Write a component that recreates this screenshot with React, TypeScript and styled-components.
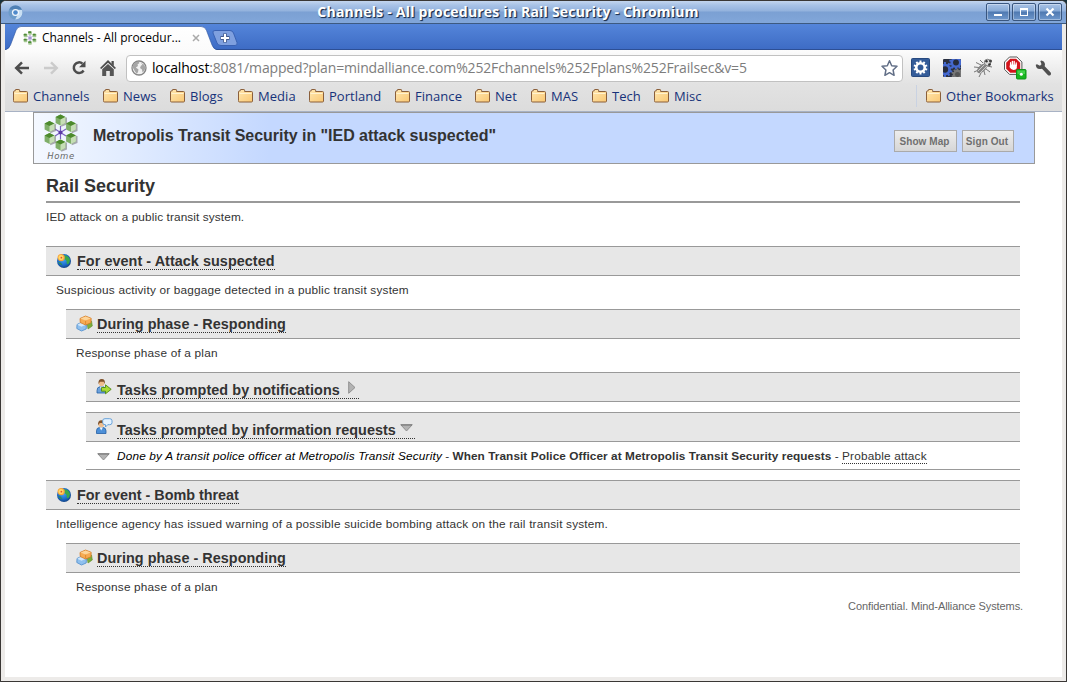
import React from "react";
import styled, { createGlobalStyle } from "styled-components";

const Global = createGlobalStyle`
  *, *::before, *::after { box-sizing: border-box; }
  html, body { margin: 0; padding: 0; background: #17303b; }
  body { width: 1067px; height: 682px; overflow: hidden; }
  svg { display: block; flex: none; }
`;

const uiFont = `"Open Sans", "Noto Sans", sans-serif`;
const pageFont = `"Liberation Sans", Arial, sans-serif`;

/* ---------- window frame ---------- */

const Window = styled.div`
  width: 1067px;
  height: 682px;
  display: flex;
  flex-direction: column;
  background: #edebe9;
  border: 1px solid #3a3735;
  border-radius: 6px 6px 0 0;
  overflow: hidden;
  font-family: ${uiFont};
`;

const TitleBar = styled.header`
  flex: none;
  height: 23px;
  display: flex;
  align-items: center;
  padding: 0 4px 0 7px;
  background: linear-gradient(#c3d5ee 0, #a9c3e7 4px, #93b2dd 10px, #7ba0d3 11px, #81a6d9 21px);
  border-bottom: 1px solid #3d5a80;
`;

const WindowTitle = styled.h1`
  flex: 1;
  margin: 0;
  padding-left: 7px;
  text-align: center;
  font-size: 14px;
  line-height: 20px;
  font-weight: 700;
  letter-spacing: 0.2px;
  color: #fff;
  text-shadow: 1px 1px 1px #1d3050, 1px 1px 0 #3b5379;
  white-space: nowrap;
`;

const WindowButtons = styled.div`
  display: flex;
  gap: 2px;
`;

const WindowButton = styled.button`
  width: 24px;
  height: 18px;
  padding: 0;
  display: grid;
  place-items: center;
  border: 1px solid #39567f;
  border-radius: 2px;
  background: linear-gradient(#a9c3e6 0, #86a9d6 7px, #4f79b1 8px, #6f98cd 100%);
  box-shadow: inset 0 0 0 1px rgba(255, 255, 255, 0.35);
`;

const Client = styled.div`
  flex: 1;
  min-height: 0;
  margin: 0 4px 4px;
  display: flex;
  flex-direction: column;
`;

/* ---------- tabs ---------- */

const TabStrip = styled.div`
  flex: none;
  height: 26px;
  display: flex;
  align-items: flex-end;
  background: linear-gradient(#5485da, #3d6bc4);
  box-shadow: inset 0 -1px 0 #2d4f95;
`;

const Tab = styled.div`
  position: relative;
  width: 210px;
  height: 24px;
  display: flex;
  align-items: center;
  padding-left: 18px;
`;

const TabShape = styled.svg`
  position: absolute;
  left: 0;
  top: 0;
`;

const TabTitle = styled.span`
  position: relative;
  width: 150px;
  margin-left: 5px;
  font-size: 12px;
  line-height: 24px;
  letter-spacing: -0.03px;
  color: #000;
  white-space: nowrap;
`;

const TabIcon = styled.span`
  position: relative;
`;

const NewTab = styled.span`
  margin: 0 0 4px -3px;
`;

/* ---------- toolbar ---------- */

const Chrome = styled.div`
  flex: none;
  height: 62px;
  display: flex;
  flex-direction: column;
  background: linear-gradient(#fcfcfc, #e2e2e2 34px, #dcdcdc);
  border-bottom: 1px solid #a8b2c4;
`;

const NavRow = styled.div`
  height: 36px;
  display: flex;
  align-items: center;
  padding-left: 9px;
`;

const NavButton = styled.span<{ $w: number }>`
  width: ${(p) => p.$w}px;
`;

const AddressBar = styled.div`
  width: 777px;
  height: 27px;
  display: flex;
  align-items: center;
  padding: 0 4px 0 4px;
  background: #fff;
  border: 1px solid #c1c1c1;
  border-radius: 4px;
`;

const Url = styled.span`
  flex: 1;
  margin-left: 5px;
  font-size: 14px;
  line-height: 24px;
  letter-spacing: -0.16px;
  color: #7d7d7d;
  white-space: nowrap;
  b { font-weight: 400; color: #000; }
`;

const Extensions = styled.div`
  display: flex;
  align-items: center;
  gap: 11px;
  margin-left: 8px;
  svg:nth-child(4) { margin-left: -1px; }
  svg:last-child { margin-left: -3px; }
`;

const BookmarkBar = styled.nav`
  height: 21px;
  display: flex;
  align-items: center;
  padding: 0 0 2px 8px;
`;

const Bookmark = styled.span<{ $w: number }>`
  width: ${(p) => p.$w}px;
  display: flex;
  align-items: center;
  gap: 5px;
  font-size: 13px;
  line-height: 20px;
  letter-spacing: 0.04px;
  color: #16327a;
  white-space: nowrap;
`;

const Divider = styled.span`
  width: 1px;
  height: 22px;
  margin-left: auto;
  margin-right: 9px;
  background: #c9d2e2;
`;

/* ---------- page ---------- */

const Page = styled.main`
  flex: 1;
  background: #fff;
  font-family: ${pageFont};
  color: #333;
`;

const Banner = styled.div`
  width: 1002px;
  height: 52px;
  margin-left: 28px;
  display: flex;
  align-items: flex-start;
  padding: 0 20px 0 9px;
  border: 1px solid #999;
  background: linear-gradient(90deg, #f4f8ff 0, #e6efff 70px, #c4d8ff 235px);
`;

const HomeLink = styled.a`
  width: 36px;
  display: flex;
  flex-direction: column;
  align-items: center;
  font: italic 8.5px/9px "DejaVu Sans", sans-serif;
  letter-spacing: 0.6px;
  color: #666;
`;

const BannerTitle = styled.h2`
  flex: 1;
  margin: 13px 0 0 14px;
  font-size: 16px;
  line-height: 20px;
  letter-spacing: -0.03px;
`;

const BannerButton = styled.button<{ $w: number }>`
  width: ${(p) => p.$w}px;
  height: 22px;
  margin: 17px 0 0 5px;
  padding: 2px 2px 0 0;
  border: 1px solid #aaa;
  background: linear-gradient(#ededed, #d6d6d6);
  font: bold 10px/18px ${pageFont};
  letter-spacing: 0.08px;
  color: #707070;
  white-space: nowrap;
`;

const Content = styled.div`
  width: 974px;
  margin-left: 41px;
`;

const PlanTitle = styled.h2`
  margin: 0;
  height: 39px;
  padding-top: 12px;
  font-size: 18px;
  line-height: 21px;
  border-bottom: 2px solid #999;
`;

const PlanText = styled.p`
  margin: 0;
  height: 43px;
  padding-top: 6px;
  font-size: 11.8px;
  line-height: 16px;
  letter-spacing: 0.11px;
`;

const Section = styled.section<{ $indent: number }>`
  margin-left: ${(p) => p.$indent}px;
`;

const Bar = styled.div`
  height: 30px;
  display: flex;
  align-items: flex-start;
  padding-left: 10px;
  background: #e7e7e7;
  border: solid #999;
  border-width: 1px 0;
`;

const BarIcon = styled.span<{ $top: number }>`
  width: 21px;
  margin-top: ${(p) => p.$top}px;
`;

const BarTitle = styled.h3<{ $top: number; $ls: number }>`
  display: flex;
  margin: ${(p) => p.$top}px 0 0;
  height: 18px;
  font-size: 14.4px;
  line-height: 19px;
  letter-spacing: ${(p) => p.$ls}px;
  border-bottom: 1px dotted #333;
  white-space: nowrap;
`;

const Note = styled.p`
  margin: 0;
  height: 33px;
  padding: 6px 0 0 10px;
  font-size: 11.8px;
  line-height: 16px;
  letter-spacing: 0.19px;
`;

const TaskRow = styled.div`
  height: 28px;
  margin-bottom: 10px;
  display: flex;
  padding: 6px 0 0 11px;
  border-bottom: 1px solid #999;
  font-size: 11.8px;
  line-height: 16px;
  white-space: nowrap;
  svg { margin: 5px 7px 0 0; }
  i { color: #000; letter-spacing: 0.17px; }
  b { letter-spacing: 0.07px; }
  a { height: 16px; letter-spacing: 0.19px; border-bottom: 1px dotted #333; }
  span { white-space: pre; }
`;

const Gap = styled.div`
  height: 10px;
`;

const Footer = styled.footer`
  width: 1018px;
  margin-top: -7px;
  text-align: right;
  font-size: 11px;
  line-height: 14px;
  letter-spacing: -0.1px;
  color: #666;
`;

/* ---------- icons ---------- */

const Folder = () => (
  <svg width="15" height="14" viewBox="0 0 15 14">
    <defs>
      <linearGradient id="fold" x1="0" y1="0" x2="1" y2="1">
        <stop offset="0" stopColor="#ffe7b0" />
        <stop offset="1" stopColor="#fac873" />
      </linearGradient>
    </defs>
    <path d="M.5 11.5v-8.500q0-1 .8-1h.9V1.200q0-.7.7-.7h3q.7 0 .7.700V2.500h6.900q1 0 1 1v8.500q0 1-1 1h-12q-1 0-1-1z" fill="url(#fold)" stroke="#8a5f3b" />
    <path d="M1.500 4.500h12" stroke="#fff2cf" />
  </svg>
);

const ChromiumLogo = () => (
  <svg width="15" height="15" viewBox="0 0 15 15">
    <circle cx="7.500" cy="7.500" r="7" fill="#6c9bc9" />
    <path d="M1.200 4.500A7 7 0 0 1 13.800 4.500L8 4.700z" fill="#4f80b5" />
    <path d="M13.900 5A7 7 0 0 1 7.200 14.500L10.300 8.500 9 4.800z" fill="#c9dff3" />
    <circle cx="7.500" cy="7.500" r="3.600" fill="#f2f7fc" />
    <circle cx="7.500" cy="7.500" r="2.300" fill="#4f8acb" />
  </svg>
);

const HEX = [[17.5, 7], [28, 13.5], [28, 25.5], [17.5, 32], [6.5, 25.5], [6.5, 13.5]];

const ChannelsLogo = () => (
  <svg width="36" height="39" viewBox="0 0 36 39">
    <path d="M17.500 13v13M12 16l11 7M12 23l11-7" stroke="#7a5fc0" strokeWidth="1.200" />
    <circle cx="17.500" cy="19.500" r="2" fill="#5a3aa6" />
    {HEX.map(([x, y]) => (
      <g key={`${x}-${y}`} transform={`translate(${x} ${y})`}>
        <path d="M.8 6.800l5.700-2.300V-2l-1-1-5 8z" fill="#777" opacity=".6" />
        <path d="M0-5.600L4.900-3v6L0 5.600-4.900 3v-6z" fill="#7fae68" />
        <path d="M0-5.600L4.900-3 0-.6-4.900-3z" fill="#4c8a2c" />
        <path d="M0-.6v6.200L4.900 3v-6z" fill="#c6deb6" />
      </g>
    ))}
  </svg>
);

const Favicon = () => (
  <svg width="14" height="14" viewBox="0 0 14 14">
    <path d="M7 4v6M4.500 5.500l5 3M4.500 8.500l5-3" stroke="#9c8bd0" />
    {[[7, 2], [11.500, 4.500], [11.500, 9.500], [7, 12], [2.500, 9.500], [2.500, 4.500]].map(([x, y]) => (
      <g key={`${x}-${y}`}>
        <rect x={x - 1.800} y={y - 1.800} width="3.600" height="3.600" rx=".8" fill="#a4c792" />
        <rect x={x - 1.800} y={y - 1.800} width="3" height="1.800" rx=".6" fill="#4f8a38" />
      </g>
    ))}
  </svg>
);

const Back = () => (
  <svg width="16" height="14" viewBox="0 0 16 14">
    <path d="M15 7H3M8 1.300L2.200 7 8 12.700" fill="none" stroke="#4d4d4d" strokeWidth="2.500" />
  </svg>
);

const Forward = () => (
  <svg width="16" height="14" viewBox="0 0 16 14">
    <path d="M1 7h12M8 1.300L13.800 7 8 12.700" fill="none" stroke="#cbcbcb" strokeWidth="2.400" />
  </svg>
);

const Reload = () => (
  <svg width="16" height="16" viewBox="0 0 16 16">
    <path d="M11.500 3.600A5.300 5.300 0 1 0 12.600 10.500" fill="none" stroke="#4d4d4d" strokeWidth="2.500" />
    <path d="M14.500 .8v6.500H8z" fill="#4d4d4d" />
  </svg>
);

const HomeIcon = () => (
  <svg width="16" height="16" viewBox="0 0 16 16">
    <path d="M8 0l8 8-1.300 1L8 2.800 1.300 9 0 8z" fill="#4d4d4d" />
    <path d="M11.500 1h2.300v5l-2.300-2z" fill="#4d4d4d" />
    <path d="M8 4l5.800 5.200V16H9.800v-5H6.200v5h-4V9.200z" fill="#555" />
  </svg>
);

const Globe = () => (
  <svg width="16" height="16" viewBox="0 0 16 16">
    <circle cx="8" cy="8" r="7" fill="#f2f2f2" stroke="#858585" strokeWidth="1.300" />
    <path d="M2 5q2-3.500 5.500-3.500L8.500 3 6.500 4.500 7 6 4.800 7.500 7.500 9.500 7 12 5.800 14 4 11.500 2 8z" fill="#a6a6a6" />
    <path d="M10 3l3 1.500 1.500 3-1 3-2 2-.5-3-2-1.500 1-2.500 1.500-.5z" fill="#a6a6a6" />
  </svg>
);

const Star = () => (
  <svg width="18" height="18" viewBox="0 0 18 18">
    <path d="M9.500 1.800l2.200 4.900 5.300.6-3.900 3.700 1 5.300-4.600-2.600-4.600 2.600 1-5.300L2 7.300l5.300-.6z" fill="#fff" stroke="#626f87" strokeWidth="1.500" strokeLinejoin="round" />
  </svg>
);

const TEETH = [0, 36, 72, 108, 144, 180, 216, 252, 288, 324];

const Cog = ({ x, y, r, c, hole }: { x: number; y: number; r: number; c: string; hole: string }) => (
  <g transform={`translate(${x} ${y})`}>
    {TEETH.map((a) => (
      <rect key={a} x={-r * 0.14} y={-r} width={r * 0.28} height={r} fill={c} transform={`rotate(${a})`} />
    ))}
    <circle r={r * 0.78} fill={c} />
    <circle r={r * 0.42} fill={hole} />
  </g>
);

const GearExt = () => (
  <svg width="20" height="20" viewBox="0 0 20 20">
    <rect x=".5" y=".5" width="18" height="18" rx="1" fill="#345c99" stroke="#27497f" />
    <Cog x={9.5} y={9.5} r={7} c="#fff" hole="#345c99" />
  </svg>
);

const GearsExt = () => (
  <svg width="20" height="20" viewBox="0 0 20 20">
    <defs>
      <clipPath id="sq"><rect x="1" y="1" width="18" height="18" rx="1" /></clipPath>
    </defs>
    <g clipPath="url(#sq)">
      <rect x="1" y="1" width="18" height="18" fill="#2a3040" />
      <Cog x={14} y={4.5} r={7} c="#4468cf" hole="#252b3c" />
      <Cog x={3} y={11.5} r={7.5} c="#4468cf" hole="#252b3c" />
      <Cog x={15.5} y={16.5} r={6} c="#777" hole="#555" />
    </g>
  </svg>
);

const BugExt = () => (
  <svg width="20" height="20" viewBox="0 0 20 20">
    <path d="M8 7L3 4.500M6 9.500L1 9M5.500 12L1 14M8 15l-2 4M11 13l1 4M13 11l4 3M14 8l5 1M10 5L7 2" stroke="#777" fill="none" />
    <ellipse cx="9" cy="10.500" rx="6" ry="3.500" transform="rotate(-42 9 10.500)" fill="#858585" />
    <path d="M5 13l7-7M7 15l7-7" stroke="#d2d2d2" strokeWidth=".9" />
    <circle cx="14.500" cy="4.500" r="3.200" fill="#ddd" stroke="#777" />
    <circle cx="13.500" cy="3.300" r="1.200" fill="#333" />
    <circle cx="17.500" cy="3" r="1.500" fill="#444" />
    <circle cx="16.500" cy="6.500" r="1.300" fill="#333" />
  </svg>
);

const BlockExt = () => (
  <svg width="24" height="24" viewBox="0 0 24 24">
    <path d="M6.500 1h7.400l5 5v7.400l-5 5H6.500l-5-5V6z" fill="#fff" stroke="#555" />
    <path d="M7.200 2.700h6l4 4v6l-4 4h-6l-4-4v-6z" fill="#d3141b" />
    <path d="M7.600 9V6.700M9.400 8.500V5.300M11.200 8.500V5.500M13.200 9.500V7" stroke="#fff" strokeWidth="1.300" strokeLinecap="round" />
    <path d="M7 8.500h6.800v2.800q0 2.700-3.400 2.700-2.200 0-3.900-3z" fill="#fff" />
    <rect x="13.500" y="13.500" width="9.500" height="9.500" rx="1" fill="#17b61f" stroke="#0d9415" />
    <rect x="14.500" y="14.500" width="7.500" height="3.500" fill="#43d04a" />
    <circle cx="18.300" cy="18.300" r="1.500" fill="#fff" />
  </svg>
);

const Wrench = () => (
  <svg width="17" height="17" viewBox="0 0 17 17">
    <path d="M.8 4.700L2 4.200l3 1.500 1.500-1.400L5.300 1 6.700.5q3 .8 3.300 3.500l-.3 2.300 6 6.200q1 1.700-.4 2.700-1.300.8-2.500-.3L7 8.700q-4 1-5.500-1.300Q.7 6 .8 4.700z" fill="#505050" />
  </svg>
);

const EventIcon = () => (
  <svg width="16" height="16" viewBox="0 0 16 16">
    <defs>
      <radialGradient id="orb" cx=".45" cy=".4" r=".62">
        <stop offset="0" stopColor="#4aa8f0" />
        <stop offset=".6" stopColor="#1c6fd0" />
        <stop offset="1" stopColor="#12407f" />
      </radialGradient>
    </defs>
    <circle cx="8" cy="8" r="7" fill="url(#orb)" />
    <path d="M8.500 2q4.800 1 5.500 5-.2 3-2.300 4.500-1.800-1-1-3.500L8.500 6z" fill="#3aa84a" />
    <path d="M2 9l3 .8 1.500 2.700q-3-.5-4.500-3.500z" fill="#2b8f52" />
    <circle cx="5.200" cy="4.600" r="3.600" fill="#f8a336" />
    <circle cx="5" cy="4.500" r="2.500" fill="#ffd968" />
    <circle cx="5.400" cy="4.700" r=".9" fill="#e0502a" />
  </svg>
);

const PhaseIcon = () => (
  <svg width="17" height="17" viewBox="0 0 17 17">
    <path d="M11 7.500l4.500-1.500.8 5-4.300 3z" fill="#7cae3b" stroke="#5d8a28" strokeWidth=".6" />
    <path d="M1 9.500L6 7l4.500 2.300-.3 4.700L5.500 16 .8 13.500z" fill="#8fc0ee" stroke="#4d8bcb" strokeWidth=".8" />
    <path d="M1.300 9.700l4.200 2 4.800-2.200L6 7.300z" fill="#d3e8fa" />
    <path d="M4 3.500L9.500 1l5.700 2.300-.3 4.500L9.600 10 4.300 7.600z" fill="#f6ab53" stroke="#d47a22" strokeWidth=".8" />
    <path d="M4.500 3.600l5.100 2 5.200-2.100L9.600 1.500z" fill="#fdd59a" />
    <path d="M9.600 5.800V9.500" stroke="#d47a22" strokeWidth=".7" />
  </svg>
);

const NotifyIcon = () => (
  <svg width="17" height="17" viewBox="0 0 17 17">
    <path d="M1 15v-2.500Q1 9 4 8.700h3q2.500.3 3 3.800V15z" fill="#6da2dc" stroke="#245fa5" strokeWidth=".8" />
    <path d="M3.800 8.500L5.500 12l1.700-3.500z" fill="#f3f7fb" />
    <circle cx="5.500" cy="5.200" r="2.800" fill="#eebd8d" />
    <path d="M2.500 6Q2 1 5.800 1q3.700 0 3 5L7.600 3.700H4z" fill="#80522b" />
    <path d="M5.500 9.500h4V6.800l5.700 4.500-5.700 4.500v-2.600h-4z" fill="#a8dc34" stroke="#4f8a14" strokeWidth=".9" />
  </svg>
);

const RequestIcon = () => (
  <svg width="17" height="17" viewBox="0 0 17 17">
    <path d="M.5 15.500v-2.700q0-3 3-3.300h3.500q3 .3 3 3.300v2.700z" fill="#4d90d8" stroke="#245fa5" strokeWidth=".8" />
    <path d="M3.500 9.300L5.200 12.500 7 9.300z" fill="#f3f7fb" />
    <circle cx="5.200" cy="6.500" r="2.800" fill="#eebd8d" />
    <path d="M2 7.200Q1.700 2.300 5.400 2.300q3.500 0 2.800 4.400L7 5H3.800z" fill="#80522b" />
    <path d="M9 .7h4.700q2.300 0 2.300 2v2q0 2-2.300 2h-2L9.500 9V6.700H9q-2.300 0-2.300-2v-2q0-2 2.300-2z" fill="#e4f2ff" stroke="#5a9ad6" strokeWidth=".9" />
  </svg>
);

const Down = () => (
  <svg width="13" height="8" viewBox="0 0 13 8">
    <path d="M.7.7h11.600L6.500 7z" fill="#b3b3b3" stroke="#8a8a8a" strokeWidth=".9" />
    <path d="M1 1h11" stroke="#777" />
  </svg>
);

const Right = () => (
  <svg width="8" height="13" viewBox="0 0 8 13">
    <path d="M.7.7v11.600L7 6.500z" fill="#b3b3b3" stroke="#8a8a8a" strokeWidth=".9" />
  </svg>
);

const Arrow = styled.span<{ $w: number; $top: number; $left: number }>`
  width: ${(p) => p.$w}px;
  padding: ${(p) => p.$top}px 0 0 ${(p) => p.$left}px;
`;

/* ---------- app ---------- */

const BOOKMARKS: [string, number][] = [
  ["Channels", 90], ["News", 67], ["Blogs", 68], ["Media", 71], ["Portland", 86],
  ["Finance", 80], ["Net", 56], ["MAS", 61], ["Tech", 62], ["Misc", 60],
];

type EventProps = { title: string; ls: number; note: string; children?: React.ReactNode };

const Event = ({ title, ls, note, children }: EventProps) => (
  <Section $indent={0}>
    <Bar>
      <BarIcon $top={6}><EventIcon /></BarIcon>
      <BarTitle $top={5} $ls={ls}>{title}</BarTitle>
    </Bar>
    <Note>{note}</Note>
    <Section $indent={20}>
      <Bar>
        <BarIcon $top={5}><PhaseIcon /></BarIcon>
        <BarTitle $top={5} $ls={0.04}>During phase - Responding</BarTitle>
      </Bar>
      <Note>Response phase of a plan</Note>
      {children}
    </Section>
  </Section>
);

export default function App() {
  return (
    <>
      <Global />
      <Window>
        <TitleBar>
          <ChromiumLogo />
          <WindowTitle>Channels - All procedures in Rail Security - Chromium</WindowTitle>
          <WindowButtons>
            <WindowButton><svg width="10" height="10"><path d="M1 8h8" stroke="#fff" strokeWidth="2" /></svg></WindowButton>
            <WindowButton><svg width="10" height="10"><rect x="1.500" y="1.500" width="7" height="7" fill="none" stroke="#fff" /><path d="M1 2h8" stroke="#fff" strokeWidth="2" /></svg></WindowButton>
            <WindowButton><svg width="10" height="10"><path d="M1.500 1.500l7 7M8.500 1.500l-7 7" stroke="#fff" strokeWidth="2.200" /></svg></WindowButton>
          </WindowButtons>
        </TitleBar>
        <Client>
          <TabStrip>
            <Tab>
              <TabShape width="212" height="24" viewBox="0 0 212 24">
                <defs>
                  <linearGradient id="tab" x1="0" y1="0" x2="0" y2="1">
                    <stop offset="0" stopColor="#fff" />
                    <stop offset="1" stopColor="#fbfbfb" />
                  </linearGradient>
                </defs>
                <path d="M0 24q4-.5 5.500-5L11 4.500Q12.500.5 16 .5h180q4 0 5.500 4l5.500 14.500q1.500 4.500 5 5z" fill="url(#tab)" />
                <path d="M0 23.500q4-.5 5.500-4.500L11 4.500Q12.500.5 16 .5h180q4 0 5.500 4l5.500 14.500q1.500 4 5 4.500" fill="none" stroke="#2f559f" strokeOpacity=".6" />
              </TabShape>
              <TabIcon><Favicon /></TabIcon>
              <TabTitle>Channels - All procedur...</TabTitle>
              <TabIcon>
                <svg width="8" height="8"><path d="M1 1l6 6M7 1L1 7" stroke="#aaa" strokeWidth="1.500" /></svg>
              </TabIcon>
            </Tab>
            <NewTab>
              <svg width="26" height="16" viewBox="0 0 26 16">
                <path d="M3 .5h15q2.500 0 3.500 2.500l3.500 9.500q1 3-2 3H9q-3 0-4-2.500L1 3Q.2.500 3 .5z" fill="#7fa0df" stroke="#3a62b3" />
                <path d="M8.500 8h9M13 3.500v9" stroke="#41588c" strokeWidth="4" />
                <path d="M9 8h8M13 4v8" stroke="#fff" strokeWidth="2.200" />
              </svg>
            </NewTab>
          </TabStrip>
          <Chrome>
            <NavRow>
              <NavButton $w={29}><Back /></NavButton>
              <NavButton $w={28}><Forward /></NavButton>
              <NavButton $w={29}><Reload /></NavButton>
              <NavButton $w={26}><HomeIcon /></NavButton>
              <AddressBar>
                <Globe />
                <Url><b>localhost</b>:8081/mapped?plan=mindalliance.com%252Fchannels%252Fplans%252Frailsec&amp;v=5</Url>
                <Star />
              </AddressBar>
              <Extensions>
                <GearExt />
                <GearsExt />
                <BugExt />
                <BlockExt />
                <Wrench />
              </Extensions>
            </NavRow>
            <BookmarkBar>
              {BOOKMARKS.map(([name, w]) => (
                <Bookmark key={name} $w={w}><Folder />{name}</Bookmark>
              ))}
              <Divider />
              <Bookmark $w={136}><Folder />Other Bookmarks</Bookmark>
            </BookmarkBar>
          </Chrome>
          <Page>
            <Banner>
              <HomeLink><ChannelsLogo />Home</HomeLink>
              <BannerTitle>Metropolis Transit Security in "IED attack suspected"</BannerTitle>
              <BannerButton $w={63}>Show Map</BannerButton>
              <BannerButton $w={52}>Sign Out</BannerButton>
            </Banner>
            <Content>
              <PlanTitle>Rail Security</PlanTitle>
              <PlanText>IED attack on a public transit system.</PlanText>
              <Event title="For event - Attack suspected" ls={0.05} note="Suspicious activity or baggage detected in a public transit system">
                <Section $indent={20}>
                  <Bar>
                    <BarIcon $top={5}><NotifyIcon /></BarIcon>
                    <BarTitle $top={8} $ls={0.08}>Tasks prompted by notifications<Arrow $w={19} $top={0} $left={8}><Right /></Arrow></BarTitle>
                  </Bar>
                  <Gap />
                  <Bar>
                    <BarIcon $top={5}><RequestIcon /></BarIcon>
                    <BarTitle $top={8} $ls={0.02}>Tasks prompted by information requests<Arrow $w={19} $top={3} $left={4}><Down /></Arrow></BarTitle>
                  </Bar>
                  <TaskRow>
                    <Down />
                    <i>Done by A transit police officer at Metropolis Transit Security</i>
                    <span> - </span>
                    <b>When Transit Police Officer at Metropolis Transit Security requests</b>
                    <span> - </span>
                    <a>Probable attack</a>
                  </TaskRow>
                </Section>
              </Event>
              <Event title="For event - Bomb threat" ls={-0.02} note="Intelligence agency has issued warning of a possible suicide bombing attack on the rail transit system." />
            </Content>
            <Footer>Confidential. Mind-Alliance Systems.</Footer>
          </Page>
        </Client>
      </Window>
    </>
  );
}
